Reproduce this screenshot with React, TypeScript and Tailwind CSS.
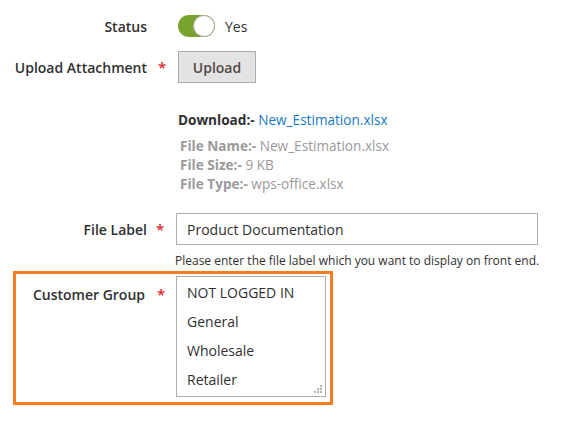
import React from "react";

const font = { fontFamily: '"Open Sans", "Noto Sans", sans-serif' };

function Req() {
  return <span className="text-[#e22626] text-[15px] font-semibold leading-none">*</span>;
}

export default function App() {
  return (
    <div className="w-[580px] h-[426px] bg-white text-[#303030] overflow-hidden" style={font}>
      {/* Status */}
      <div className="flex items-center mt-[15px] h-[22px]">
        <div className="w-[147px] text-right text-[14px] font-semibold">Status</div>
        <div className="w-[31px]" />
        <div className="relative w-[37px] h-[22px] rounded-full bg-[#79a22e]">
          <div className="absolute right-0 top-0 w-[22px] h-[22px] rounded-full bg-white border border-[#adadad]" />
        </div>
        <span className="ml-[10px] text-[14px]">Yes</span>
      </div>

      {/* Upload */}
      <div className="flex items-center mt-[14px] h-[32px]">
        <div className="w-[147px] text-right text-[14px] font-semibold">Upload Attachment</div>
        <div className="w-[31px] pl-[11px] flex items-center">
          <Req />
        </div>
        <button className="w-[78px] h-[32px] bg-[#e3e3e3] border border-[#adadad] text-[#514943] text-[14px] font-semibold">
          Upload
        </button>
      </div>

      {/* Download info */}
      <div className="ml-[178px] mt-[27px] text-[13.6px] leading-[19px]">
        <div>
          <span className="font-bold">Download:-</span>{" "}
          <span className="text-[#1979c3]">New_Estimation.xlsx</span>
        </div>
        <div className="mt-[7px] ml-[2px] text-[#9a9a9a]">
          <div>
            <span className="font-bold">File Name:-</span> New_Estimation.xlsx
          </div>
          <div>
            <span className="font-bold">File Size:-</span> 9 KB
          </div>
          <div>
            <span className="font-bold">File Type:-</span> wps-office.xlsx
          </div>
        </div>
      </div>

      {/* File Label */}
      <div className="flex items-center mt-[20px] h-[32px]">
        <div className="w-[147px] text-right text-[14px] font-semibold">File Label</div>
        <div className="w-[29px] pl-[9px] flex items-center">
          <Req />
        </div>
        <div className="w-[362px] h-[32px] border border-[#adadad] flex items-center pl-[10px] text-[14px]">
          Product Documentation
        </div>
      </div>
      <div className="ml-[175px] mt-[8px] text-[12px] leading-[16px]">
        Please enter the file label which you want to display on front end.
      </div>

      {/* Customer Group */}
      <div className="ml-[13px] mt-[2px] w-[320px] h-[134px] border-[3px] border-[#f67c22] flex">
        <div className="w-[129px] text-right text-[14px] font-semibold mt-[11px] leading-[19px]">Customer Group</div>
        <div className="w-[31px] pl-[12px] mt-[11px] leading-[19px]">
          <Req />
        </div>
        <div className="relative mt-[2px] w-[150px] h-[121px] border border-[#adadad] pt-[1px] pl-[10px] text-[14px] leading-[29px] text-[#303030]">
          <div>NOT LOGGED IN</div>
          <div>General</div>
          <div>Wholesale</div>
          <div>Retailer</div>
          <svg className="absolute right-[3px] bottom-[3px]" width="8" height="8" viewBox="0 0 8 8">
            <rect x="6" y="0" width="2" height="2" fill="#b5b5b5" />
            <rect x="3" y="3" width="2" height="2" fill="#b5b5b5" />
            <rect x="6" y="3" width="2" height="2" fill="#b5b5b5" />
            <rect x="0" y="6" width="2" height="2" fill="#b5b5b5" />
            <rect x="3" y="6" width="2" height="2" fill="#b5b5b5" />
            <rect x="6" y="6" width="2" height="2" fill="#b5b5b5" />
          </svg>
        </div>
      </div>
    </div>
  );
}
